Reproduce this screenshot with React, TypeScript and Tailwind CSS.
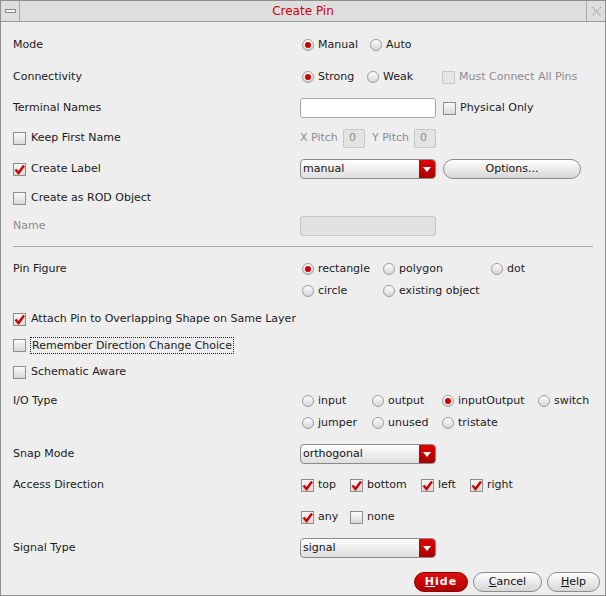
import React from 'react';

const FONT = { fontFamily: '"DejaVu Sans", Verdana, sans-serif' };

const Radio: React.FC<{ on?: boolean }> = ({ on }) => (
  <span className="flex h-[12px] w-[12px] shrink-0 items-center justify-center rounded-full border border-[#9c9c9c] bg-linear-to-b from-white to-[#d6d6d6]">
    {on && <span className="h-[6px] w-[6px] rounded-full bg-[#d00000]" />}
  </span>
);

const Check: React.FC<{ on?: boolean; dim?: boolean }> = ({ on, dim }) => (
  <span
    className={`relative h-[13px] w-[13px] shrink-0 border ${
      dim ? 'border-[#c8c8c8] bg-[#e6e6e6]' : 'border-[#8e8e8e] bg-linear-to-b from-[#fafafa] to-[#d9d9d9]'
    }`}
  >
    {on && (
      <svg viewBox="0 0 13 13" className="absolute -left-[1px] -top-[1px] h-[13px] w-[13px]">
        <path d="M2.5 6.5 L5.5 10 L11 2.5" fill="none" stroke="#d00000" strokeWidth="2.4" strokeLinejoin="miter" />
      </svg>
    )}
  </span>
);

const Opt: React.FC<{ w?: string; radio?: boolean; on?: boolean; children: React.ReactNode }> = ({ w = '', radio, on, children }) => (
  <div className={`flex items-center ${w}`}>
    {radio ? (
      <span className="ml-[2px] mr-[4px] flex"><Radio on={on} /></span>
    ) : (
      <span className="ml-[1px] mr-[4px] flex"><Check on={on} /></span>
    )}
    <span>{children}</span>
  </div>
);

const Drop: React.FC<{ value: string }> = ({ value }) => (
  <div className="flex h-[20px] w-[136px] overflow-hidden rounded-[4px] border border-[#8a8a8a] bg-linear-to-b from-white to-[#dedede]">
    <span className="flex-1 pl-[2px] leading-[18px] text-[#111]">{value}</span>
    <span className="flex w-[16px] items-center justify-center bg-linear-to-b from-[#e00000] to-[#a80000]">
      <svg width="8" height="5" viewBox="0 0 8 5"><path d="M0 0 H8 L4 5 Z" fill="#fff" /></svg>
    </span>
  </div>
);

const Row: React.FC<{ label?: React.ReactNode; mt: string; children?: React.ReactNode; dim?: boolean }> = ({ label, mt, children, dim }) => (
  <div className={`flex ${mt}`}>
    <div className={`flex h-[20px] w-[287px] items-center ${dim ? 'text-[#8c8c8c]' : ''}`}>{label}</div>
    <div className="flex flex-col gap-[2px]">{children}</div>
  </div>
);

const Line: React.FC<{ children: React.ReactNode }> = ({ children }) => (
  <div className="flex h-[20px] items-center">{children}</div>
);

const LeftCheck: React.FC<{ on?: boolean; children: React.ReactNode; focus?: boolean }> = ({ on, children, focus }) => (
  <div className="flex items-center">
    <Check on={on} />
    <span className={`ml-[4px] ${focus ? 'border border-dotted border-[#222] px-[1px] leading-[15px]' : 'ml-[5px]'}`}>{children}</span>
  </div>
);

const Pill: React.FC<{ w: string; red?: boolean; children: React.ReactNode }> = ({ w, red, children }) => (
  <div
    className={`flex h-[20px] ${w} items-center justify-center rounded-full border ${
      red
        ? 'border-[#8a0000] bg-linear-to-b from-[#e01010] to-[#b00000] font-bold text-white'
        : 'border-[#8c8c8c] bg-linear-to-b from-white to-[#d6d6d6] text-[#111]'
    }`}
  >
    {children}
  </div>
);

export default function App() {
  return (
    <div style={FONT} className="h-[596px] w-[606px] overflow-hidden border border-[#8f8f8f] bg-[#eeeeee] text-[11px] text-[#1a1a1a]">
      {/* title bar */}
      <div className="flex h-[21px] items-stretch border-b border-[#9a9a9a] bg-[#dedede]">
        <div className="flex w-[19px] items-center justify-center border-r border-[#a8a8a8]">
          <span className="h-[4px] w-[11px] border border-[#8a8a8a] bg-[#f4f4f4]" />
        </div>
        <div className="flex flex-1 items-center justify-center text-[12px] text-[#d00000]">Create Pin</div>
        <div className="flex w-[19px] items-center justify-center border-l border-[#a8a8a8]">
          <svg width="11" height="11" viewBox="0 0 11 11">
            <path d="M1 1 L10 10 M10 1 L1 10" stroke="#a8a8a8" strokeWidth="1.4" strokeDasharray="1.5 1" />
          </svg>
        </div>
      </div>

      <div className="flex flex-col pl-[12px]">
        <Row label="Mode" mt="mt-[13px]">
          <Line>
            <Opt radio on w="w-[68px]">Manual</Opt>
            <Opt radio>Auto</Opt>
          </Line>
        </Row>
        <Row label="Connectivity" mt="mt-[12px]">
          <Line>
            <Opt radio on w="w-[65px]">Strong</Opt>
            <Opt radio w="w-[77px]">Weak</Opt>
            <div className="flex items-center text-[#8c8c8c]">
              <Check dim />
              <span className="ml-[4px]">Must Connect All Pins</span>
            </div>
          </Line>
        </Row>
        <Row label="Terminal Names" mt="mt-[11px]">
          <Line>
            <div className="h-[20px] w-[136px] rounded-[3px] border border-[#a6a6a6] bg-white" />
            <div className="ml-[7px] flex items-center">
              <Check />
              <span className="ml-[4px]">Physical Only</span>
            </div>
          </Line>
        </Row>
        <Row label={<LeftCheck>Keep First Name</LeftCheck>} mt="mt-[10px]">
          <Line>
            <div className="flex items-center text-[#8c8c8c]">
              <span className="w-[43px]">X Pitch</span>
              <span className="flex h-[19px] w-[22px] items-center rounded-[2px] border border-[#c6c6c6] bg-[#e3e3e3] pl-[5px]">0</span>
              <span className="ml-[7px] w-[42px]">Y Pitch</span>
              <span className="flex h-[19px] w-[22px] items-center rounded-[2px] border border-[#c6c6c6] bg-[#e3e3e3] pl-[5px]">0</span>
            </div>
          </Line>
        </Row>
        <Row label={<LeftCheck on>Create Label</LeftCheck>} mt="mt-[11px]">
          <Line>
            <Drop value="manual" />
            <div className="ml-[7px]">
              <Pill w="w-[138px]">Options...</Pill>
            </div>
          </Line>
        </Row>
        <Row label={<LeftCheck>Create as ROD Object</LeftCheck>} mt="mt-[9px]" />
        <Row label="Name" dim mt="mt-[8px]">
          <Line>
            <div className="h-[20px] w-[136px] rounded-[3px] border border-[#c8c8c8] bg-[#e2e2e2]" />
          </Line>
        </Row>

        <div className="mr-[12px] mt-[10px] h-[1px] bg-[#aaaaaa]" />

        <Row label="Pin Figure" mt="mt-[12px]">
          <Line>
            <Opt radio on w="w-[81px]">rectangle</Opt>
            <Opt radio w="w-[108px]">polygon</Opt>
            <Opt radio>dot</Opt>
          </Line>
          <Line>
            <Opt radio w="w-[81px]">circle</Opt>
            <Opt radio>existing object</Opt>
          </Line>
        </Row>
        <Row label={<LeftCheck on>Attach Pin to Overlapping Shape on Same Layer</LeftCheck>} mt="mt-[8px]" />
        <Row label={<LeftCheck focus>Remember Direction Change Choice</LeftCheck>} mt="mt-[6px]" />
        <Row label={<LeftCheck>Schematic Aware</LeftCheck>} mt="mt-[7px]" />
        <Row label="I/O Type" mt="mt-[9px]">
          <Line>
            <Opt radio w="w-[70px]">input</Opt>
            <Opt radio w="w-[70px]">output</Opt>
            <Opt radio on w="w-[96px]">inputOutput</Opt>
            <Opt radio>switch</Opt>
          </Line>
          <Line>
            <Opt radio w="w-[70px]">jumper</Opt>
            <Opt radio w="w-[70px]">unused</Opt>
            <Opt radio>tristate</Opt>
          </Line>
        </Row>
        <Row label="Snap Mode" mt="mt-[11px]">
          <Line>
            <Drop value="orthogonal" />
          </Line>
        </Row>
        <Row label="Access Direction" mt="mt-[11px]">
          <Line>
            <Opt on w="w-[49px]">top</Opt>
            <Opt on w="w-[71px]">bottom</Opt>
            <Opt on w="w-[49px]">left</Opt>
            <Opt on>right</Opt>
          </Line>
        </Row>
        <Row mt="mt-[12px]">
          <Line>
            <Opt on w="w-[49px]">any</Opt>
            <Opt>none</Opt>
          </Line>
        </Row>
        <Row label="Signal Type" mt="mt-[11px]">
          <Line>
            <Drop value="signal" />
          </Line>
        </Row>

        <div className="mr-[5px] mt-[14px] flex justify-end gap-[5px]">
          <Pill w="w-[54px]" red>
            <span className="tracking-[1px]"><span className="underline">H</span>ide</span>
          </Pill>
          <Pill w="w-[69px]">
            <span><span className="underline">C</span>ancel</span>
          </Pill>
          <Pill w="w-[53px]">
            <span><span className="underline">H</span>elp</span>
          </Pill>
        </div>
      </div>
    </div>
  );
}
